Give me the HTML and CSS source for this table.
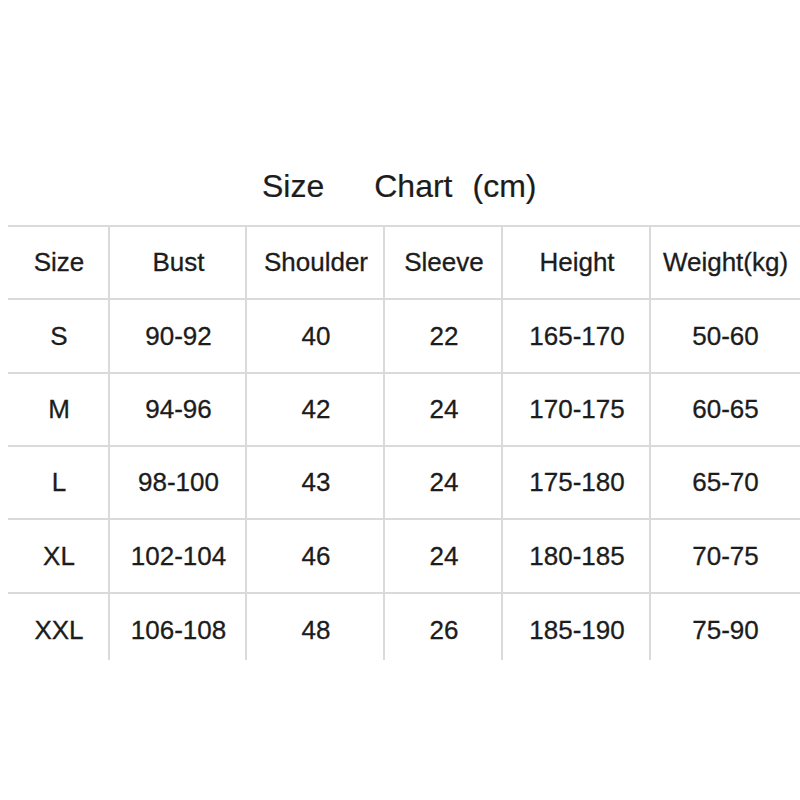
FILE: index.html
```html
<!DOCTYPE html>
<html>
<head>
<meta charset="utf-8">
<link rel="stylesheet" href="styles.css">
</head>
<body>
<div class="page">
  <h1 class="title"><span>Size</span><span class="chart">Chart</span><span class="unit">(cm)</span></h1>
  <div class="table">
    <div class="cell first">Size</div><div class="cell">Bust</div><div class="cell">Shoulder</div><div class="cell">Sleeve</div><div class="cell">Height</div><div class="cell">Weight(kg)</div>
    <div class="cell first">S</div><div class="cell">90-92</div><div class="cell">40</div><div class="cell">22</div><div class="cell">165-170</div><div class="cell">50-60</div>
    <div class="cell first">M</div><div class="cell">94-96</div><div class="cell">42</div><div class="cell">24</div><div class="cell">170-175</div><div class="cell">60-65</div>
    <div class="cell first">L</div><div class="cell">98-100</div><div class="cell">43</div><div class="cell">24</div><div class="cell">175-180</div><div class="cell">65-70</div>
    <div class="cell first">XL</div><div class="cell">102-104</div><div class="cell">46</div><div class="cell">24</div><div class="cell">180-185</div><div class="cell">70-75</div>
    <div class="cell first last">XXL</div><div class="cell last">106-108</div><div class="cell last">48</div><div class="cell last">26</div><div class="cell last">185-190</div><div class="cell last">75-90</div>
  </div>
</div>
</body>
</html>
```

FILE: styles.css
```css
html, body {
  margin: 0;
  padding: 0;
  background: #ffffff;
}

.page {
  width: 800px;
  height: 800px;
  padding-top: 166px;
  box-sizing: border-box;
  font-family: "Liberation Sans", Arial, sans-serif;
  color: #1c1c1c;
}

.title {
  margin: 0 0 19px 0;
  height: 40px;
  line-height: 40px;
  font-size: 32px;
  font-weight: normal;
  display: flex;
  justify-content: flex-start;
  padding-left: 262px;
  -webkit-text-stroke: 0.2px #1c1c1c;
}

.title .chart {
  margin-left: 50px;
}

.title .unit {
  margin-left: 20px;
}

.table {
  margin-left: 8px;
  width: 792px;
  display: grid;
  grid-template-columns: 102px 137px 138px 118px 148px 149px;
  grid-template-rows: 73px 74px 73px 73px 74px 68px;
}

.cell {
  border-top: 2px solid #dadada;
  border-left: 2px solid #dadada;
  margin-left: -2px;
  display: flex;
  align-items: center;
  justify-content: center;
  font-size: 26px;
  white-space: nowrap;
  -webkit-text-stroke: 0.3px #1c1c1c;
}

.cell.first {
  border-left: none;
  margin-left: 0;
}

.cell.last {
  padding-top: 6px;
}
```
